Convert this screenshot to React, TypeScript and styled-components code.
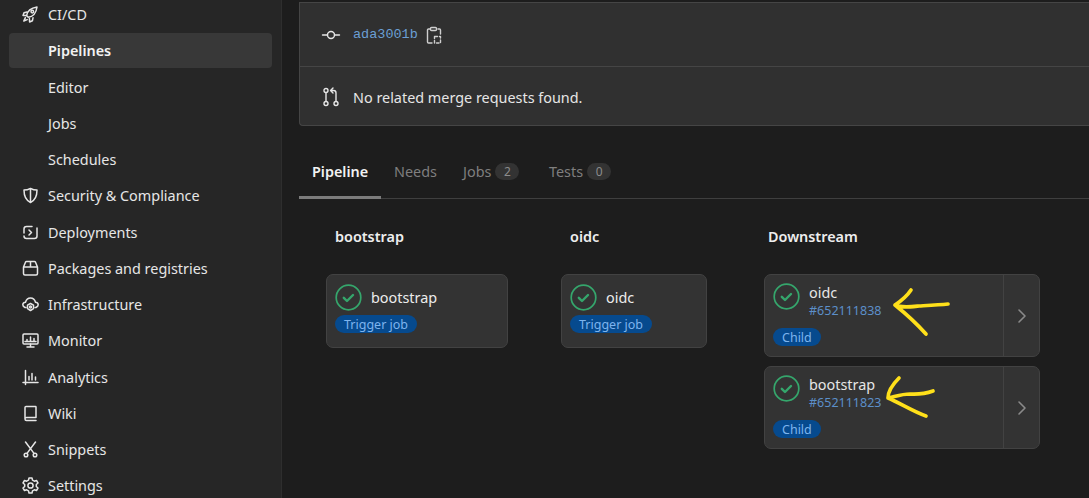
import React from 'react';
import styled, { createGlobalStyle } from 'styled-components';

const GlobalStyle = createGlobalStyle`
  html, body {
    margin: 0;
    padding: 0;
    height: 100%;
    overflow: hidden;
    background: #1d1d1d;
  }
  body {
    font-family: "Noto Sans", "Open Sans", sans-serif;
    font-size: 14.4px;
    color: #ececec;
  }
`;

const Page = styled.div`
  width: 1089px;
  height: 498px;
  display: flex;
  overflow: hidden;
  position: relative;
`;

const Sidebar = styled.nav`
  width: 282px;
  flex: none;
  background: #262626;
  border-right: 1px solid #2e2e2e;
  box-sizing: border-box;
  padding: 0 9px;
  overflow: hidden;
`;

const NavList = styled.div`
  margin-top: -3px;
  display: flex;
  flex-direction: column;
  gap: 1.25px;
`;

const NavItem = styled.div<{ $active?: boolean }>`
  height: 35px;
  flex: none;
  display: flex;
  align-items: center;
  border-radius: 4px;
  width: 263px;
  background: ${p => (p.$active ? '#383838' : 'transparent')};
  font-weight: ${p => (p.$active ? 600 : 400)};
  color: ${p => (p.$active ? '#f2f2f2' : '#e6e6e6')};
`;

const NavIcon = styled.svg`
  width: 17px;
  height: 17px;
  margin-left: 13px;
  flex: none;
  fill: none;
  stroke: #e6e6e6;
  stroke-width: 1.5;
  stroke-linecap: round;
  stroke-linejoin: round;
`;

const NavLabel = styled.span`
  margin-left: 9px;
`;

const SubLabel = styled.span`
  margin-left: 39px;
`;

const Main = styled.main`
  flex: 1;
  min-width: 0;
  padding-left: 17px;
  display: flex;
  flex-direction: column;
`;

const Panel = styled.section`
  margin-top: 2px;
  height: 124px;
  flex: none;
  background: #303030;
  border: 1px solid #454545;
  border-right: none;
  border-radius: 0 0 0 4px;
  box-sizing: border-box;
  display: flex;
  flex-direction: column;
`;

const PanelRow = styled.div<{ $divided?: boolean }>`
  flex: ${p => (p.$divided ? '0 0 64px' : '1')};
  box-sizing: border-box;
  display: flex;
  align-items: center;
  padding-left: 21px;
  padding-top: ${p => (p.$divided ? 0 : 2)}px;
  border-bottom: ${p => (p.$divided ? '1px solid #454545' : 'none')};
`;

const RowIcon = styled.svg`
  width: 20px;
  height: 20px;
  flex: none;
  fill: none;
  stroke: #e6e6e6;
  stroke-width: 1.4;
  stroke-linecap: round;
  stroke-linejoin: round;
`;

const CommitLink = styled.span`
  margin-left: 12px;
  font-family: "Liberation Mono", monospace;
  font-size: 13.5px;
  color: #6b9fd4;
`;

const ClipIcon = styled(RowIcon)`
  margin-left: 6px;
  stroke: #cfcfcf;
`;

const RowText = styled.span`
  margin-left: 12px;
  color: #e6e6e6;
`;

const Tabs = styled.div`
  margin-top: 24px;
  height: 49px;
  flex: none;
  display: flex;
  border-bottom: 1px solid #3f3f3f;
  box-sizing: border-box;
`;

const Tab = styled.div<{ $active?: boolean; $w: number }>`
  width: ${p => p.$w}px;
  flex: none;
  box-sizing: border-box;
  display: flex;
  align-items: center;
  padding: 0 0 4px 13px;
  gap: 4px;
  margin-bottom: -1px;
  color: ${p => (p.$active ? '#f2f2f2' : '#7f7f7f')};
  font-weight: ${p => (p.$active ? 600 : 400)};
  border-bottom: 3px solid ${p => (p.$active ? '#7c7c7c' : 'transparent')};
`;

const Count = styled.span`
  min-width: 24px;
  height: 17px;
  border-radius: 9px;
  background: #333333;
  color: #8c8c8c;
  font-size: 12px;
  display: flex;
  align-items: center;
  justify-content: center;
`;

const Stages = styled.div`
  display: flex;
  align-items: flex-start;
  padding: 28px 0 0 27px;
`;

const Stage = styled.div<{ $w: number }>`
  width: ${p => p.$w}px;
  flex: none;
`;

const StageTitle = styled.div<{ $inset: number }>`
  font-weight: 600;
  color: #eeeeee;
  height: 20px;
  line-height: 20px;
  padding-left: ${p => p.$inset}px;
  margin-bottom: 27px;
`;

const JobCard = styled.div<{ $w: number }>`
  width: ${p => p.$w}px;
  height: 74px;
  box-sizing: border-box;
  background: #333333;
  border: 1px solid #424242;
  border-radius: 7px;
  padding: 9px 8px;
`;

const JobHead = styled.div`
  display: flex;
  align-items: center;
  gap: 9px;
  height: 27px;
`;

const StatusIcon = styled.svg`
  width: 27px;
  height: 27px;
  flex: none;
`;

const Badge = styled.span`
  display: inline-flex;
  align-items: center;
  height: 18px;
  padding: 0 9px;
  border-radius: 9px;
  background: #064a8e;
  color: #7db4ee;
  font-size: 12.5px;
`;

const JobBadgeRow = styled.div`
  margin-top: 4px;
  display: flex;
`;

const ChildCard = styled.div`
  width: 276px;
  height: 83px;
  box-sizing: border-box;
  background: #333333;
  border: 1px solid #424242;
  border-radius: 7px;
  display: flex;
  margin-bottom: 9px;
`;

const ChildBody = styled.div`
  flex: 1;
  padding: 8px 8px 10px;
  display: flex;
  flex-direction: column;
  justify-content: space-between;
`;

const ChildHead = styled.div`
  display: flex;
  gap: 9px;
`;

const ChildName = styled.div`
  line-height: 19px;
  color: #e6e6e6;
`;

const ChildId = styled.div`
  font-size: 12.5px;
  line-height: 18px;
  color: #5c8fc9;
`;

const ChildToggle = styled.div`
  width: 35px;
  flex: none;
  border-left: 1px solid #424242;
  display: flex;
  align-items: center;
  justify-content: center;
`;

const Chevron = styled.svg`
  width: 16px;
  height: 16px;
  fill: none;
  stroke: #8a8a8a;
  stroke-width: 1.6;
  stroke-linecap: round;
  stroke-linejoin: round;
`;

const Scribble = styled.svg`
  position: absolute;
  fill: none;
  stroke: #ffe01a;
  stroke-width: 3.7;
  stroke-linecap: round;
  stroke-linejoin: round;
`;

const ArrowOne = styled(Scribble)`
  left: 890px;
  top: 285px;
  width: 65px;
  height: 55px;
`;

const ArrowTwo = styled(Scribble)`
  left: 885px;
  top: 375px;
  width: 55px;
  height: 45px;
`;

const navIcons: Record<string, React.ReactNode> = {
  rocket: (
    <>
      <path d="M6.200 11.200 4.600 9.600c.6-3.800 3.800-7.600 10.400-8.600-.9 6.600-4.800 9.800-8.800 10.200Z" />
      <circle cx="10.300" cy="5.600" r="1.300" />
      <path d="M5 6 2 6.800 1 9.400l3.200.1M11 11.800l-.6 3-2.800 1.200-.2-3.400M3.400 11.600l-1.600 3.400 3.400-1.400" />
    </>
  ),
  shield: (
    <>
      <path d="M8.500 1.500c2 1 4.300 1.600 6.500 1.600 0 6.200-1.800 10.400-6.500 12.400C3.800 13.500 2 9.300 2 3.100c2.200 0 4.500-.6 6.500-1.600Z" />
      <path d="M8.500 2v13" />
    </>
  ),
  deploy: (
    <>
      <path d="M2 9V5c0-1.600 1-2.500 2.500-2.500H10M15 4v8c0 1.600-1 2.500-2.500 2.500h-8C3 14.500 2 13.600 2 12" />
      <path d="M7 6l2.500 2.500L7 11" />
    </>
  ),
  box: (
    <path d="M1.500 7v6.500c0 .8.700 1.500 1.500 1.500h11c.8 0 1.500-.7 1.500-1.500V7M1.500 7l2-4.800c.2-.4.600-.7 1-.7h8c.4 0 .8.300 1 .7l2 4.800M1.500 7h14M8.500 1.500V7" />
  ),
  infra: (
    <>
      <path d="M4 11.500H3C1.500 10.800.8 9.800.8 8.800.8 7.500 1.800 6.500 3.500 6.300 4.200 3.600 6 2 8.500 2s4.300 1.600 5 4.300c1.700.2 2.700 1.200 2.700 2.500 0 1-.7 2-2.200 2.700h-1" />
      <circle cx="8.500" cy="11" r="1" />
      <path d="M8.500 7.500l3 1.700v3.500l-3 1.800-3-1.800V9.200z" />
    </>
  ),
  monitor: (
    <>
      <rect x="1" y="2" width="15" height="10" rx="1" />
      <path d="M8.500 12v3M5 15h7M5 9V7.500M8.500 9V5M12 9V6.500M3 9.500h11" />
    </>
  ),
  chart: <path d="M3.500 1.500v14M1 13.500h15M7 11V7.500M10 11V4.500M13.500 11V8" />,
  book: (
    <path d="M3 13.500V2.500c0-.6.400-1 1-1h9.500c.3 0 .500.200.500.500v10.500H4.500C3.600 12.500 3 13 3 14s.6 1.500 1.500 1.500H14" />
  ),
  scissors: (
    <>
      <circle cx="4" cy="14" r="1.800" />
      <circle cx="13" cy="14" r="1.800" />
      <path d="M3.500 1 12 12.400M13.500 1 5 12.400" />
    </>
  ),
  gear: (
    <>
      <circle cx="8.500" cy="8.500" r="2.600" />
      <path d="M7 1h3l.5 2.200 1.800 1 2.200-.7L16 6l-1.700 1.500v2L16 11l-1.500 2.500-2.200-.7-1.800 1L10 16H7l-.5-2.200-1.800-1-2.200.7L1 11l1.700-1.500v-2L1 6l1.500-2.500 2.200.7 1.800-1z" />
    </>
  ),
};

const navItems = [
  { label: 'CI/CD', icon: 'rocket' },
  { label: 'Pipelines', active: true },
  { label: 'Editor' },
  { label: 'Jobs' },
  { label: 'Schedules' },
  { label: 'Security & Compliance', icon: 'shield' },
  { label: 'Deployments', icon: 'deploy' },
  { label: 'Packages and registries', icon: 'box' },
  { label: 'Infrastructure', icon: 'infra' },
  { label: 'Monitor', icon: 'monitor' },
  { label: 'Analytics', icon: 'chart' },
  { label: 'Wiki', icon: 'book' },
  { label: 'Snippets', icon: 'scissors' },
  { label: 'Settings', icon: 'gear' },
];

const Status = () => (
  <StatusIcon viewBox="0 0 27 27">
    <circle cx="13.500" cy="13.500" r="12.300" fill="none" stroke="#35a66c" strokeWidth="1.700" />
    <path d="M8.800 13.800l3.200 3.200 6-6" fill="none" stroke="#35a66c" strokeWidth="2.400" strokeLinecap="round" strokeLinejoin="round" />
  </StatusIcon>
);

const Child = ({ name, id }: { name: string; id: string }) => (
  <ChildCard>
    <ChildBody>
      <ChildHead>
        <Status />
        <div>
          <ChildName>{name}</ChildName>
          <ChildId>{id}</ChildId>
        </div>
      </ChildHead>
      <div>
        <Badge>Child</Badge>
      </div>
    </ChildBody>
    <ChildToggle>
      <Chevron viewBox="0 0 16 16">
        <path d="M5 2l6 6-6 6" />
      </Chevron>
    </ChildToggle>
  </ChildCard>
);

const App: React.FC = () => (
  <Page>
    <GlobalStyle />
    <Sidebar>
      <NavList>
        {navItems.map(item => (
          <NavItem key={item.label} $active={item.active}>
            {item.icon ? (
              <>
                <NavIcon viewBox="0 0 17 17">{navIcons[item.icon]}</NavIcon>
                <NavLabel>{item.label}</NavLabel>
              </>
            ) : (
              <SubLabel>{item.label}</SubLabel>
            )}
          </NavItem>
        ))}
      </NavList>
    </Sidebar>
    <Main>
      <Panel>
        <PanelRow $divided>
          <RowIcon viewBox="0 0 20 20">
            <circle cx="10" cy="10" r="3.500" />
            <path d="M1.500 10h5M13.500 10h5" />
          </RowIcon>
          <CommitLink>ada3001b</CommitLink>
          <ClipIcon viewBox="0 0 20 20">
            <path d="M6 4H4.500C4 4 3.500 4.500 3.500 5v12c0 .5.500 1 1 1H8M14 4h1.500c.5 0 1 .5 1 1v4" />
            <rect x="6.500" y="2.500" width="6" height="3" rx="1" />
            <path d="M11 11.500h5.500V18H10.500v-6.500" strokeDasharray="2.500 2" />
          </ClipIcon>
        </PanelRow>
        <PanelRow>
          <RowIcon viewBox="0 0 20 20">
            <circle cx="5" cy="3.500" r="2" />
            <circle cx="5" cy="16.500" r="2" />
            <circle cx="15" cy="16.500" r="2" />
            <path d="M5 5.500v9M15 14.500V6c0-1.500-.8-2.500-2.300-2.500H10M12 1l-2.500 2.500L12 6" />
          </RowIcon>
          <RowText>No related merge requests found.</RowText>
        </PanelRow>
      </Panel>
      <Tabs>
        <Tab $active $w={82}>Pipeline</Tab>
        <Tab $w={69}>Needs</Tab>
        <Tab $w={86}>
          Jobs <Count>2</Count>
        </Tab>
        <Tab $w={90}>
          Tests <Count>0</Count>
        </Tab>
      </Tabs>
      <Stages>
        <Stage $w={235}>
          <StageTitle $inset={9}>bootstrap</StageTitle>
          <JobCard $w={182}>
            <JobHead>
              <Status />
              bootstrap
            </JobHead>
            <JobBadgeRow>
              <Badge>Trigger job</Badge>
            </JobBadgeRow>
          </JobCard>
        </Stage>
        <Stage $w={203}>
          <StageTitle $inset={9}>oidc</StageTitle>
          <JobCard $w={146}>
            <JobHead>
              <Status />
              oidc
            </JobHead>
            <JobBadgeRow>
              <Badge>Trigger job</Badge>
            </JobBadgeRow>
          </JobCard>
        </Stage>
        <Stage $w={276}>
          <StageTitle $inset={4}>Downstream</StageTitle>
          <Child name="oidc" id="#652111838" />
          <Child name="bootstrap" id="#652111823" />
        </Stage>
      </Stages>
    </Main>
    <ArrowOne viewBox="0 0 65 55">
      <path d="M21 5C17 11 11 16 5 20c10 8 22 19 31 29M5 20c6 3 14 2 24 1 9-.5 20-1 29-2" />
    </ArrowOne>
    <ArrowTwo viewBox="0 0 55 45">
      <path d="M14 3C8 9 3 16 3 23c10 4 26 14 38 18M3 23c6-1 13-4 22-4 9 .5 16-.5 23-3" />
    </ArrowTwo>
  </Page>
);

export default App;
